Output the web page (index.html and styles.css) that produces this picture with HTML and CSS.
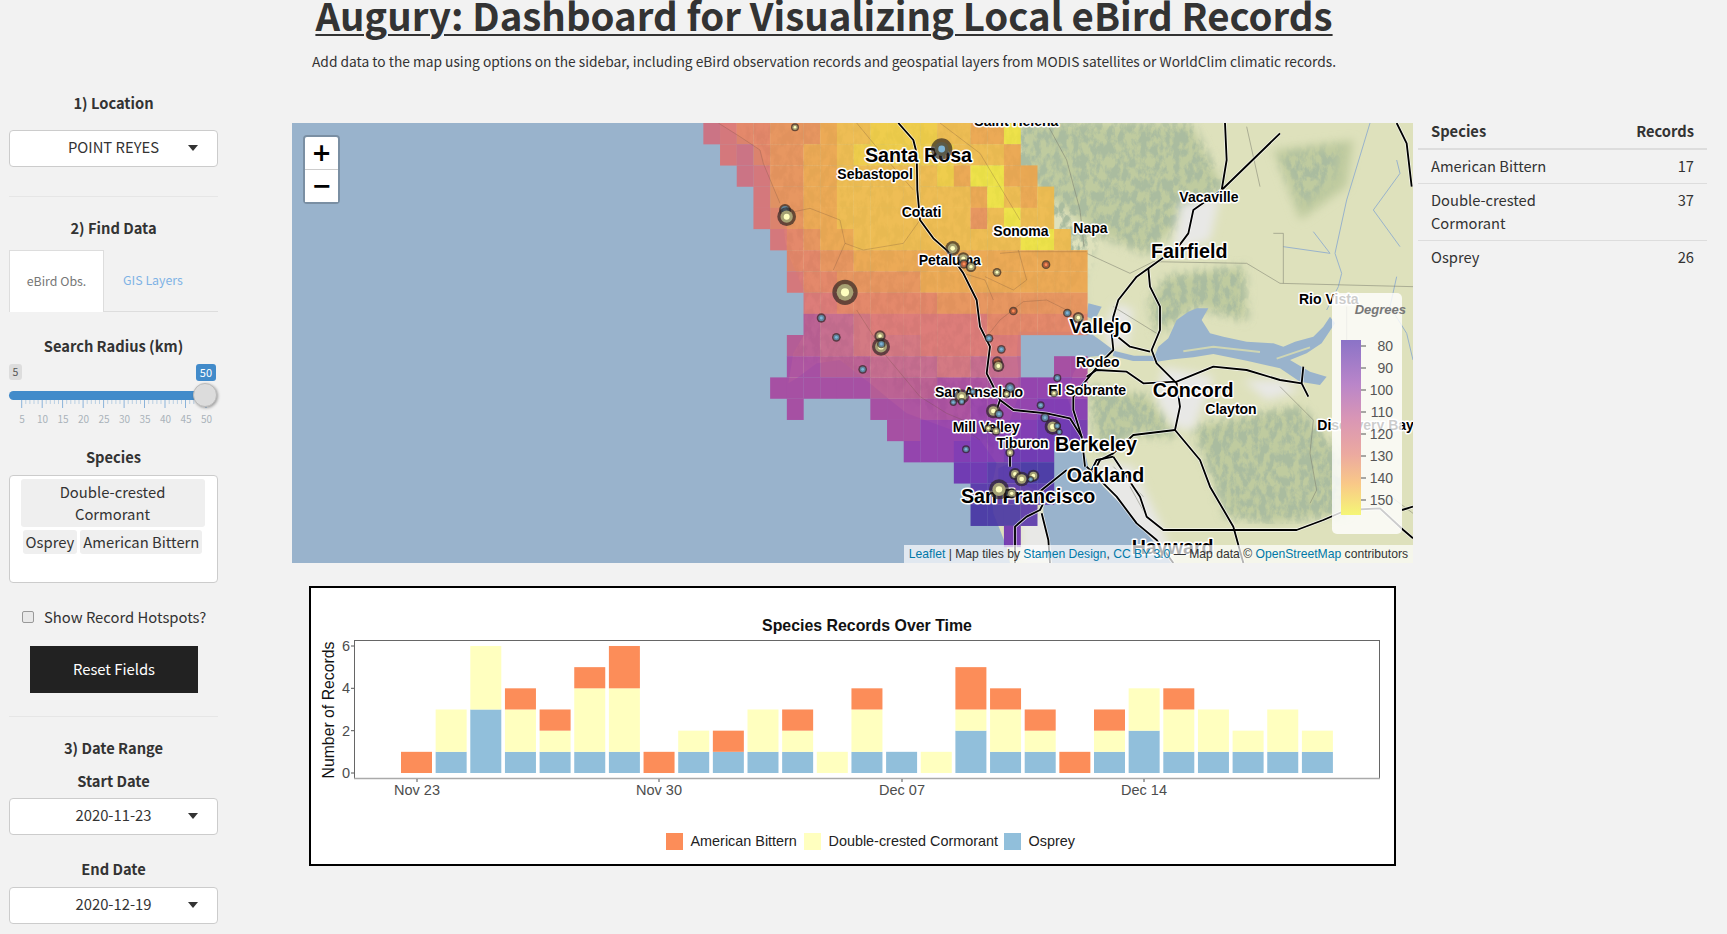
FILE: index.html
```html
<!DOCTYPE html>
<html lang="en">
<head>
  <meta charset="UTF-8" />
  <title>Augury</title>
  <link rel="stylesheet" href="styles.css">
</head>
<body>

  <header class="page-head">
    <h1>Augury: Dashboard for Visualizing Local eBird Records</h1>
    <p>Add data to the map using options on the sidebar, including eBird observation records and geospatial layers from MODIS satellites or WorldClim climatic records.</p>
  </header>

  <div class="layout">

    <aside class="sidebar">
      <h4 class="side-title">1) Location</h4>
      <div class="select select-location">POINT REYES</div>
      <hr class="rule rule-location">

      <h4 class="side-title">2) Find Data</h4>
      <div class="tabs">
        <span class="tab tab-active">eBird Obs.</span>
        <span class="tab">GIS Layers</span>
      </div>

      <h4 class="side-title title-radius">Search Radius (km)</h4>
      <div class="slider">
        <div class="slider-badges">
          <span class="badge">5</span>
          <span class="badge badge-max">50</span>
        </div>
        <div class="slider-track"><span class="slider-handle"></span></div>
        <svg class="slider-scale" width="209" height="30" viewBox="0 0 209 30">
          <path class="tick-minor" d="M16.8 0v4M20.9 0v4M25 0v4M29.1 0v4M37.2 0v4M41.3 0v4M45.4 0v4M49.5 0v4M57.7 0v4M61.8 0v4M65.9 0v4M70 0v4M78.2 0v4M82.3 0v4M86.4 0v4M90.5 0v4M98.7 0v4M102.8 0v4M106.9 0v4M111 0v4M119.2 0v4M123.3 0v4M127.4 0v4M131.5 0v4M139.7 0v4M143.8 0v4M147.9 0v4M152 0v4M160.2 0v4M164.3 0v4M168.4 0v4M172.5 0v4M180.7 0v4M184.8 0v4M188.9 0v4M193 0v4"/>
          <path class="tick-major" d="M12.7 0v8M33.2 0v8M53.6 0v8M74.1 0v8M94.6 0v8M115.1 0v8M135.5 0v8M156 0v8M176.5 0v8M197 0v8"/>
          <g class="scale-text">
            <text x="13" y="23">5</text><text x="33.5" y="23">10</text><text x="54" y="23">15</text><text x="74.5" y="23">20</text><text x="95" y="23">25</text>
            <text x="115.5" y="23">30</text><text x="136" y="23">35</text><text x="156.5" y="23">40</text><text x="177" y="23">45</text><text x="197.500" y="23">50</text>
          </g>
        </svg>
      </div>

      <h4 class="side-title title-species">Species</h4>
      <div class="chip-box">
        <span class="chip chip-wide">Double-crested Cormorant</span>
        <span class="chip">Osprey</span>
        <span class="chip">American Bittern</span>
      </div>

      <label class="check-row"><input type="checkbox"> Show Record Hotspots?</label>
      <button class="reset">Reset Fields</button>
      <hr class="rule rule-dates">

      <h4 class="side-title">3) Date Range</h4>
      <h4 class="side-title title-start">Start Date</h4>
      <div class="select select-start">2020-11-23</div>
      <h4 class="side-title title-end">End Date</h4>
      <div class="select select-end">2020-12-19</div>
    </aside>

    <main class="main">
      <div class="map">
        <svg class="map-canvas" viewBox="-1464 9 3363 1320" width="1121" height="440">
          <defs>
            <filter id="terrain" x="0" y="0" width="100%" height="100%">
              <feTurbulence type="fractalNoise" baseFrequency="0.05 0.028" numOctaves="5" seed="11" result="noise"/>
              <feColorMatrix in="noise" type="matrix" values="0 0 0 0 0.40  0 0 0 0 0.50  0 0 0 0 0.35  4 0 0 0 -1.5" result="shade"/>
              <feGaussianBlur in="SourceAlpha" stdDeviation="16" result="mask"/>
              <feComposite in="shade" in2="mask" operator="in"/>
            </filter>
            <filter id="soft"><feGaussianBlur stdDeviation="14"/></filter>
            <g id="roadlines">
              <path d="M355 9L400 60 410 100 412 210 420 300 460 355 505 395 550 460 590 540 600 620 630 680 620 760 660 840 700 870 800 880 870 895 905 950 915 1040"/>
              <path d="M1500 40L1325 210 1240 270 1225 340 1195 380 1140 420 1070 470 1015 540 1000 590 995 640 1000 690 960 730 920 780 880 830 880 870 905 950"/>
              <path d="M1335 9L1340 120 1325 210"/>
              <path d="M1105 445L1110 500 1140 560 1140 630 1115 690 1130 730 1190 790 1200 860 1185 930 1260 1020 1290 1100 1360 1220 1390 1329"/>
              <path d="M1000 640L1050 680 1110 695"/>
              <path d="M920 770L950 750 1040 755 1090 790 1190 785 1300 740 1400 750 1500 780 1565 790 1585 830M1565 790L1570 740"/>
              <path d="M1185 930L1060 945 1000 1000 960 1020 950 1040M1000 1010L1080 1130 1100 1190 1150 1230 1550 1230 1630 1200 1700 1170 1800 1165 1870 1230 1899 1255M1866 1170L1899 1160"/>
              <path d="M920 1040L1010 1130 1070 1210 1130 1260 1180 1329"/>
              <path d="M760 1130L860 1050"/>
              <path d="M800 1130L780 1170 740 1190 705 1220 705 1329M785 1180L805 1260 810 1329"/>
              <path d="M690 1000L690 1040M660 840L650 870"/>
              <path d="M1850 9L1880 70 1895 200M1000 1010L950 1020 935 1050"/>
            </g>
          </defs>

          <rect class="land" x="-1464" y="9" width="3363" height="1320"/>
          <g filter="url(#soft)">
            <path class="forest" d="M720 9H1230L1330 200 1210 300 1100 400 950 340 820 240 720 170Z"/>
            <path class="forest" d="M1160 470L1390 440 1400 600 1250 560 1130 640 1110 540Z"/>
            <path class="forest" d="M930 800L1110 830 1190 950 1050 940 960 1010 940 900Z"/>
            <path class="forest" d="M1240 920L1560 860 1680 1010 1700 1180 1480 1210 1340 1190Z"/>
            <path class="forest" d="M1480 90L1720 60 1700 200 1560 300Z"/>
          </g>
          <g filter="url(#terrain)">
            <path d="M-120 9H1230L1330 200 1210 300 1100 400 950 340 900 500 920 640 700 660 620 900 690 1000 640 1000 300 780 20 700Z"/>
            <path d="M1160 470L1390 440 1400 600 1250 560 1130 640 1110 540Z"/>
            <path d="M930 800L1110 830 1190 950 1050 940 960 1010 940 900Z"/>
            <path d="M1240 920L1560 860 1680 1010 1700 1180 1480 1210 1340 1190Z"/>
            <path d="M1500 110L1680 80 1660 180 1570 260Z"/>
          </g>
          <g class="urban" filter="url(#soft)">
            <path d="M1010 550L1060 570 1040 680 985 690 970 620Z"/>
            <path d="M1150 740L1300 770 1240 930 1180 920 1130 840Z"/>
            <path d="M950 1020L1060 1040 1150 1230 1180 1329H1050L980 1130Z"/>
            <path d="M1200 250L1320 230 1290 360 1180 400Z"/>
            <path d="M1390 780L1500 780 1560 810 1460 840Z"/>
            <path d="M720 1190L810 1180 830 1329H720Z"/>
          </g>

          <path class="water" d="M-1464 9H-185L-120 50-60 90-50 130 0 250 20 390 75 520 75 640 40 700 25 790 50 775 110 730 180 720 270 790 330 840 380 880 490 920 600 960 650 1030 635 1100 640 1180 680 1280 690 1329H-1464Z"/>
          <path class="water" d="M655 1045L690 1030 700 990 690 900 715 830 715 750 710 700 715 635 925 635 960 660 1000 690 990 705 930 710 900 730 880 760 860 830 890 900 905 960 925 1040 970 1100 1040 1170 1100 1240 1150 1300 1180 1329H815L810 1280 790 1180 790 1120 720 1090 655 1090Z"/>
          <path class="water" d="M925 550L965 560 945 600 920 590Z"/>
          <path class="water" d="M1125 705L1135 680 1165 655 1190 600 1225 575 1250 565 1285 565 1265 600 1290 640 1330 650 1400 665 1480 670 1510 680 1545 665 1600 650 1630 620 1650 590 1665 610 1625 670 1580 700 1530 720 1590 755 1640 770 1620 795 1560 785 1500 745 1400 722 1300 702 1240 712 1180 718 1130 725Z"/>
          <path class="marsh" d="M1210 694L1300 680 1440 696M1490 716L1590 682"/>
          <path class="river" d="M1000 700L1060 715 1125 715"/>
          <path class="river river-thin" d="M1770 9L1700 240 1665 400 1685 460 1675 500 1640 570M1600 335L1650 400M1850 120L1860 160 1780 270 1860 380M1510 380L1650 400"/>
          <path class="river river-thin" d="M1850 470L1830 560 1880 640 1899 720"/>

          <path class="minor" d="M800 9L860 120 900 270 912 380M920 400L1050 460 1120 425 1400 430 1500 490 1899 500M1480 340L1510 340 1510 490M1000 560L1130 640M1500 800L1600 900 1590 1000 1610 1110 1590 1150M1700 560L1700 1000M1820 1120L1899 1180M1000 1040L1090 1130M1050 1100L1100 1190M1400 20L1440 200"/>

          <g id="grid"></g>

          <path class="minor minor-top" d="M-185 9L-120 50-60 90-50 130 0 250M20 280L90 265 180 300 195 370 160 450M230 9L330 130 400 210M420 300L370 370 250 390 195 370M550 460L615 480 640 540M660 600L730 545 800 540 860 570M715 390L740 480 700 510 615 470M590 540L560 490M620 650L660 600M230 570L320 710 420 830 500 880 620 930 690 1000M600 960L540 920M660 400L720 395 920 395M480 9L600 100 720 300"/>

          <use class="road-halo" href="#roadlines"/>
          <use class="road-line" href="#roadlines"/>

          <g class="labels">
            <text class="small" x="583" y="18">Saint Helena</text>
            <text class="big" x="255" y="125">Santa Rosa</text>
            <text class="small" x="172" y="178">Sebastopol</text>
            <text class="small" x="365" y="292">Cotati</text>
            <text class="small" x="640" y="347">Sonoma</text>
            <text class="small" x="880" y="338">Napa</text>
            <text class="small" x="416" y="435">Petaluma</text>
            <text class="big" x="1113" y="415">Fairfield</text>
            <text class="small" x="1198" y="247">Vacaville</text>
            <text class="big" x="868" y="638">Vallejo</text>
            <text class="small" x="888" y="741">Rodeo</text>
            <text class="small" x="465" y="830">San Anselmo</text>
            <text class="small" x="805" y="826">El Sobrante</text>
            <text class="big" x="1118" y="830">Concord</text>
            <text class="small" x="1276" y="882">Clayton</text>
            <text class="small" x="518" y="935">Mill Valley</text>
            <text class="small" x="650" y="985">Tiburon</text>
            <text class="big" x="825" y="992">Berkeley</text>
            <text class="big" x="860" y="1087">Oakland</text>
            <text class="big" x="543" y="1150">San Francisco</text>
            <text class="big" x="1055" y="1302">Hayward</text>
            <text class="small" x="1557" y="553">Rio Vista</text>
            <text class="small" x="1612" y="930">Discovery Bay</text>
          </g>

          <g id="pins"></g>
        </svg>

        <div class="zoom-control">
          <span class="zoom-btn">+</span>
          <span class="zoom-btn">&minus;</span>
        </div>

        <div class="map-legend">
          <svg width="70" height="241" viewBox="0 0 70 241">
            <defs>
              <linearGradient id="ramp" x1="0" y1="0" x2="0" y2="1">
                <stop offset="0" stop-color="#8b73c7"/>
                <stop offset="0.25" stop-color="#b985c9"/>
                <stop offset="0.45" stop-color="#d996b5"/>
                <stop offset="0.65" stop-color="#eba9a0"/>
                <stop offset="0.82" stop-color="#f9c888"/>
                <stop offset="1" stop-color="#f5f676"/>
              </linearGradient>
            </defs>
            <text class="legend-title" x="74" y="21">Degrees</text>
            <rect x="9" y="47" width="20" height="175" fill="url(#ramp)"/>
            <path class="legend-ticks" d="M29 53h5M29 75h5M29 97h5M29 119h5M29 141h5M29 163h5M29 185h5M29 207h5"/>
            <g class="legend-text">
              <text x="61" y="58">80</text><text x="61" y="80">90</text><text x="61" y="102">100</text><text x="61" y="124">110</text>
              <text x="61" y="146">120</text><text x="61" y="168">130</text><text x="61" y="190">140</text><text x="61" y="212">150</text>
            </g>
          </svg>
        </div>

        <div class="attribution"><a>Leaflet</a> | Map tiles by <a>Stamen Design</a>, <a>CC BY 3.0</a> &mdash; Map data &copy; <a>OpenStreetMap</a> contributors</div>
      </div>

      <div class="chart-box">
        <svg class="chart" width="1083" height="276" viewBox="2 2 1083 276">
          <text class="chart-title" x="558" y="45">Species Records Over Time</text>
          <rect class="plot" x="45.500" y="54.500" width="1025" height="138"/>
          <line class="plot-base" x1="45" y1="192.500" x2="1071" y2="192.500"/>
          <g id="bars"></g>
          <text class="axis-name" transform="translate(25 124) rotate(-90)">Number of Records</text>
          <path class="axis-ticks" d="M42 187h3M42 144.700h3M42 102.300h3M42 60h3M108 193v3M350 193v3M593 193v3M835 193v3"/>
          <g class="axis-y">
            <text x="41" y="192">0</text><text x="41" y="149.700">2</text><text x="41" y="107.300">4</text><text x="41" y="65">6</text>
          </g>
          <g class="axis-x">
            <text x="108" y="209">Nov 23</text><text x="350" y="209">Nov 30</text><text x="593" y="209">Dec 07</text><text x="835" y="209">Dec 14</text>
          </g>
          <rect class="key-orange" x="357" y="247" width="17" height="17"/>
          <text class="key-text" x="381.500" y="260">American Bittern</text>
          <rect class="key-yellow" x="495" y="247" width="17" height="17"/>
          <text class="key-text" x="519.500" y="260">Double-crested Cormorant</text>
          <rect class="key-blue" x="695" y="247" width="17" height="17"/>
          <text class="key-text" x="719.500" y="260">Osprey</text>
        </svg>
      </div>
    </main>

    <section class="summary">
      <table class="summary-table">
        <thead>
          <tr><th>Species</th><th class="num">Records</th></tr>
        </thead>
        <tbody>
          <tr><td>American Bittern</td><td class="num">17</td></tr>
          <tr><td>Double-crested Cormorant</td><td class="num">37</td></tr>
          <tr><td>Osprey</td><td class="num">26</td></tr>
        </tbody>
      </table>
    </section>

  </div>

  <script src="app.js"></script>
</body>
</html>
```

FILE: styles.css
```css
:root {
  --fundo: #f2f2f2;
  --texto: #333;
  --linha: #ddd;
  --azul: #428bca;
  --laranja: #fc8d59;
  --amarelo: #ffffbf;
  --celeste: #91bfdb;
}

body {
  margin: 0;
  background-color: var(--fundo);
  color: var(--texto);
  font-family: "Noto Sans CJK SC", "Open Sans", sans-serif;
  font-size: 14.8px;
}

.page-head {
  display: flow-root;
  width: 1648px;
  height: 90px;
  text-align: center;
}

.page-head h1 {
  margin: -8px 0 0;
  font-size: 38.400px;
  line-height: 44px;
  font-weight: 700;
  text-decoration: underline;
  text-decoration-thickness: 2px;
  text-underline-offset: 3px;
}

.page-head p {
  margin: 14px 0 0;
  font-size: 13.770px;
  line-height: 22px;
}

.layout {
  display: grid;
  grid-template-columns: 292px 1121px 1fr;
}

/* sidebar */

.sidebar {
  padding: 2px 74px 0 9px;
}

.side-title {
  margin: 0;
  font-size: 14.700px;
  line-height: 22px;
  font-weight: 700;
  text-align: center;
}

.select {
  position: relative;
  box-sizing: border-box;
  height: 37px;
  line-height: 32px;
  background: #fff;
  border: 1px solid #ccc;
  border-radius: 4px;
  text-align: center;
}

.select::after {
  content: "";
  position: absolute;
  right: 19px;
  top: 14px;
  border-top: 6px solid #333;
  border-left: 5px solid transparent;
  border-right: 5px solid transparent;
}

.select-location {
  margin-top: 16px;
}

.rule {
  height: 1px;
  margin: 0;
  border: none;
  background: #e6e6e6;
}

.rule-location {
  margin: 29px 0 20px;
}

.tabs {
  display: flex;
  height: 62px;
  margin-top: 11px;
  border-bottom: 1px solid var(--linha);
  box-sizing: border-box;
  font-size: 12.400px;
}

.tab {
  box-sizing: border-box;
  width: 95px;
  height: 62px;
  padding-left: 3px;
  line-height: 60px;
  text-align: center;
  color: #7fb2e5;
}

.tab-active {
  padding-left: 0;
  background: #fff;
  color: #777;
  border: 1px solid var(--linha);
  border-bottom: none;
}

.title-radius {
  margin-top: 23px;
}

.slider {
  margin-top: 7px;
}

.slider-badges {
  display: flex;
  justify-content: space-between;
  height: 17px;
  padding-right: 2px;
}

.badge {
  padding: 0 3.500px;
  height: 16px;
  line-height: 16px;
  font-size: 10.500px;
  background: #ddd;
  color: #555;
  border-radius: 3px;
}

.badge-max {
  height: 17px;
  line-height: 17px;
  padding: 0 4px;
  font-size: 11px;
  background: var(--azul);
  color: #fff;
}

.slider-track {
  position: relative;
  height: 9px;
  margin-top: 10px;
  width: 197px;
  background: var(--azul);
  border-radius: 5px;
}

.slider-handle {
  position: absolute;
  right: -11px;
  top: -8px;
  box-sizing: border-box;
  width: 24px;
  height: 24px;
  background: #dcdcdc;
  border: 1px solid #bbb;
  border-radius: 50%;
  box-shadow: 1px 1px 3px rgba(0, 0, 0, 0.35);
}

.slider-scale {
  display: block;
}

.tick-minor {
  stroke: #b9cfe3;
  stroke-width: 1;
  fill: none;
}

.tick-major {
  stroke: #8ab3da;
  stroke-width: 1;
  fill: none;
}

.scale-text text {
  font-size: 10px;
  fill: #aab2ba;
  text-anchor: middle;
}

.title-species {
  margin-top: 16px;
}

.chip-box {
  display: flex;
  flex-wrap: wrap;
  justify-content: center;
  align-content: flex-start;
  gap: 3px;
  box-sizing: border-box;
  height: 108px;
  margin-top: 7px;
  padding: 3px 9px 0 7px;
  background: #fff;
  border: 1px solid #ccc;
  border-radius: 4px;
  text-align: center;
  line-height: 22px;
}

.chip {
  padding: 1px 3px;
  background: #efefef;
  border-radius: 3px;
}

.chip-wide {
  width: 184px;
  box-sizing: border-box;
  padding: 2px 20px;
}

.check-row {
  display: flex;
  align-items: center;
  gap: 10px;
  height: 22px;
  margin-top: 22px;
  padding-left: 13px;
  white-space: nowrap;
}

.check-row input {
  appearance: none;
  width: 12px;
  height: 12px;
  margin: 1px 0 0;
  background: #e9e9e9;
  border: 1px solid #999;
  border-radius: 2px;
}

.reset {
  display: block;
  width: 168px;
  height: 47px;
  margin: 19px 0 0 21px;
  padding: 0 0 2px;
  background: #222;
  color: #fff;
  border: none;
  font: inherit;
}

.rule-dates {
  margin: 23px 0 20px;
}

.title-start {
  margin-top: 11px;
}

.select-start {
  margin-top: 6px;
}

.title-end {
  margin-top: 23px;
}

.select-end {
  margin-top: 7px;
}

/* map */

.main {
  padding-top: 33px;
}

.map {
  position: relative;
  width: 1121px;
  height: 440px;
  overflow: hidden;
  background: #99b3cc;
}

.map-canvas {
  display: block;
}

.land { fill: #dee1bc; }
.forest { fill: #bfcb9f; }
.urban { fill: #e8e8e6; }
.water { fill: #99b3cc; }

.marsh {
  fill: none;
  stroke: #cfd6b4;
  stroke-width: 6;
}

.river {
  fill: none;
  stroke: #99b3cc;
  stroke-width: 16;
}

.river-thin {
  stroke-width: 3;
}

.minor {
  fill: none;
  stroke: #7d7f70;
  stroke-width: 1.6;
}

.minor-top {
  stroke: #6b4a3a;
  stroke-width: 1.3;
  opacity: 0.6;
}

.road-halo,
.road-line {
  fill: none;
  stroke-linejoin: round;
}

.road-halo {
  stroke: rgba(255, 255, 255, 0.75);
  stroke-width: 10;
}

.road-line {
  stroke: #000;
  stroke-width: 5.5;
}

.labels text {
  font-family: "Liberation Sans", sans-serif;
  font-weight: 700;
  fill: #000;
  stroke: #fff;
  stroke-width: 9px;
  stroke-linejoin: round;
  paint-order: stroke;
}

.labels .big { font-size: 59px; }
.labels .small { font-size: 42px; }

.zoom-control {
  position: absolute;
  left: 11px;
  top: 12px;
  display: flex;
  flex-direction: column;
  border: 2px solid rgba(0, 0, 0, 0.2);
  border-radius: 4px;
}

.zoom-btn {
  width: 33px;
  height: 32px;
  line-height: 32px;
  background: #fff;
  color: #000;
  text-align: center;
  font-family: "DejaVu Sans", sans-serif;
  font-size: 24px;
  font-weight: 700;
}

.zoom-btn:first-child {
  border-bottom: 1px solid #ccc;
  border-radius: 2px 2px 0 0;
}

.map-legend {
  position: absolute;
  left: 1040px;
  top: 170px;
  width: 70px;
  height: 241px;
  background: rgba(255, 255, 255, 0.8);
  border-radius: 5px;
  font-family: "Liberation Sans", sans-serif;
}

.map-legend svg {
  display: block;
  overflow: visible;
}

.legend-title {
  font-size: 13px;
  font-weight: 700;
  font-style: italic;
  fill: #777;
  text-anchor: end;
}

.legend-ticks {
  stroke: #555;
  stroke-width: 1;
}

.legend-text text {
  font-size: 14px;
  fill: #555;
  text-anchor: end;
}

.attribution {
  position: absolute;
  right: 0;
  bottom: 0;
  height: 18px;
  line-height: 18px;
  padding: 0 5px;
  background: rgba(255, 255, 255, 0.7);
  font-family: "Liberation Sans", sans-serif;
  font-size: 12.150px;
  color: #333;
  white-space: nowrap;
}

.attribution a {
  color: #0078a8;
}

/* chart */

.chart-box {
  box-sizing: border-box;
  width: 1087px;
  height: 280px;
  margin: 23px 0 0 17px;
  background: #fff;
  border: 2px solid #000;
}

.chart {
  display: block;
  font-family: "Liberation Sans", sans-serif;
}

.chart-title {
  font-size: 15.900px;
  font-weight: 700;
  fill: #111;
  text-anchor: middle;
}

.plot {
  fill: #fff;
  stroke: #666;
  stroke-width: 1;
}

.plot-base {
  stroke: #aaa;
  stroke-width: 1.5;
}

.axis-name {
  font-size: 15.800px;
  fill: #111;
  text-anchor: middle;
}

.axis-ticks {
  stroke: #555;
  stroke-width: 1;
  fill: none;
}

.axis-y text {
  font-size: 14.500px;
  fill: #4d4d4d;
  text-anchor: end;
}

.axis-x text {
  font-size: 14.500px;
  fill: #4d4d4d;
  text-anchor: middle;
}

.key-text {
  font-size: 14.400px;
  fill: #222;
}

.key-orange { fill: var(--laranja); }
.key-yellow { fill: var(--amarelo); }
.key-blue { fill: var(--celeste); }

/* table */

.summary {
  padding: 29px 20px 0 5px;
}

.summary-table {
  width: 289px;
  border-collapse: collapse;
  font-size: 14.700px;
  line-height: 23px;
}

.summary-table th,
.summary-table td {
  padding: 4px 13px 6px;
  text-align: left;
  border-bottom: 1px solid var(--linha);
  vertical-align: top;
}

.summary-table th {
  padding: 0 13px 6px;
  font-weight: 700;
  border-bottom: 2px solid var(--linha);
}

.summary-table th:first-child,
.summary-table td:first-child {
  width: 150px;
}

.summary-table tbody tr:last-child td {
  border-bottom: none;
}

.summary-table .num {
  text-align: right;
}
```

FILE: app.js
```js
// raster layer: each row is [first column, cells], one letter per cell, "." leaves a hole
const cores = {
  a: "#f1e33c", b: "#f2cb3e", c: "#f1b947", d: "#eea349", e: "#e98d55", f: "#e57d60",
  g: "#dd7071", h: "#d36c7c", i: "#c4608a", j: "#b8528f", k: "#a8439e", l: "#9436ab",
  m: "#7f2fb1", n: "#6c2cb0", o: "#5530a8", p: "#4430a2"
};

const linhas = [
  [0, "hgffeeedccbbbbccdda"],
  [1, "ghfeeddcbbbbbbcccd"],
  [2, "hgeeddccccccbdaadd"],
  [3, "geeddccccccccdacdc"],
  [3, "gfeddccccccccecacc"],
  [4, "gfeddccccccccccaac"],
  [5, "ffeedddddddddddddd"],
  [5, "gffeeeeedddddddddd"],
  [6, "ggffffffeeeeeeeee"],
  [6, "jiihgggggggffffff"],
  [5, "jjiihhhhgggggg"],
  [5, "kkjjjiiiihhiii..kk"],
  [4, "kkkkkkjjjjkkkkkllll"],
  [5, "k....kkkkkkllllmmm"],
  [11, "kklllmmmmnnn"],
  [12, "lllmmmnnn"],
  [15, "nnoopp"],
  [16, "ooooo"],
  [16, "pppo"],
  [18, "n"]
];

const NS = "http://www.w3.org/2000/svg";

function forma(pai, nome, attrs) {
  const el = document.createElementNS(NS, nome);
  for (const k in attrs) el.setAttribute(k, attrs[k]);
  pai.appendChild(el);
  return el;
}

const grid = document.getElementById("grid");
grid.setAttribute("opacity", "0.88");
linhas.forEach(([inicio, celulas], r) => {
  [...celulas].forEach((c, i) => {
    if (c === ".") return;
    forma(grid, "rect", {
      x: -230 + 50.1 * (inicio + i),
      y: 9 + 63.6 * r,
      width: 50.6,
      height: 64.1,
      fill: cores[c]
    });
  });
});

// record markers: x, y, kind, outer radius
const tipos = {
  y: ["#ffffbf", "#aaa777"],
  b: ["#7fb4d6", "#5f8aa3"],
  o: ["#fc8d59", "#b9603c"],
  d: ["#7fb4d6", "#5c5b4a"]
};

const pinos = [
  [45, 22, "y", 12], [485, 87, "d", 32], [15, 270, "b", 18], [20, 290, "y", 28],
  [518, 385, "y", 22], [550, 415, "y", 18], [552, 432, "o", 14], [573, 440, "y", 16],
  [651, 457, "y", 13], [798, 434, "o", 13], [195, 517, "y", 38], [124, 594, "b", 14],
  [169, 652, "b", 13], [300, 648, "y", 17], [303, 680, "y", 27], [304, 672, "b", 13],
  [248, 748, "b", 13], [627, 655, "b", 13], [664, 688, "b", 13], [700, 573, "o", 13],
  [862, 579, "b", 13], [895, 593, "y", 17], [652, 725, "o", 16], [655, 738, "y", 18],
  [690, 803, "b", 16], [680, 822, "y", 12], [578, 815, "b", 10], [545, 830, "y", 22],
  [520, 847, "b", 11], [545, 845, "b", 11], [832, 774, "b", 12], [822, 820, "y", 12],
  [782, 856, "b", 12], [640, 873, "y", 22], [657, 882, "b", 14], [795, 893, "b", 14],
  [818, 920, "y", 24], [832, 918, "b", 11], [838, 936, "b", 10], [625, 925, "y", 12],
  [648, 933, "y", 14], [690, 998, "y", 14], [558, 988, "b", 12], [705, 1062, "y", 18],
  [725, 1077, "y", 22], [760, 1067, "y", 18], [752, 1078, "b", 10], [657, 1108, "y", 30],
  [695, 1120, "y", 16]
];

const camadaPinos = document.getElementById("pins");
pinos.forEach(([x, y, t, r]) => {
  forma(camadaPinos, "circle", { cx: x, cy: y, r: r, fill: "#2b2422", "fill-opacity": 0.68 });
  forma(camadaPinos, "circle", { cx: x, cy: y, r: r * 0.66, fill: tipos[t][1], "fill-opacity": 0.95 });
  forma(camadaPinos, "circle", { cx: x, cy: y, r: r * 0.32, fill: tipos[t][0] });
});

// bars per day from Nov 23: osprey, cormorant, bittern
const dias = [
  [0, 0, 1], [1, 2, 0], [3, 3, 0], [1, 2, 1], [1, 1, 1], [1, 3, 1], [1, 3, 2],
  [0, 0, 1], [1, 1, 0], [1, 0, 1], [1, 2, 0], [1, 1, 1], [0, 1, 0], [1, 2, 1],
  [1, 0, 0], [0, 1, 0], [2, 1, 2], [1, 2, 1], [1, 1, 1], [0, 0, 1], [1, 1, 1],
  [2, 2, 0], [1, 2, 1], [1, 2, 0], [1, 1, 0], [1, 2, 0], [1, 1, 0]
];

const barras = document.getElementById("bars");
const corBarra = ["#91bfdb", "#ffffbf", "#fc8d59"];
const BASE = 187;
const UNIDADE = 21.17;

dias.forEach((valores, i) => {
  let total = 0;
  valores.forEach((v, j) => {
    if (!v) return;
    total += v;
    forma(barras, "rect", {
      x: 92 + 34.65 * i,
      y: BASE - total * UNIDADE,
      width: 31,
      height: v * UNIDADE,
      fill: corBarra[j]
    });
  });
});
```
